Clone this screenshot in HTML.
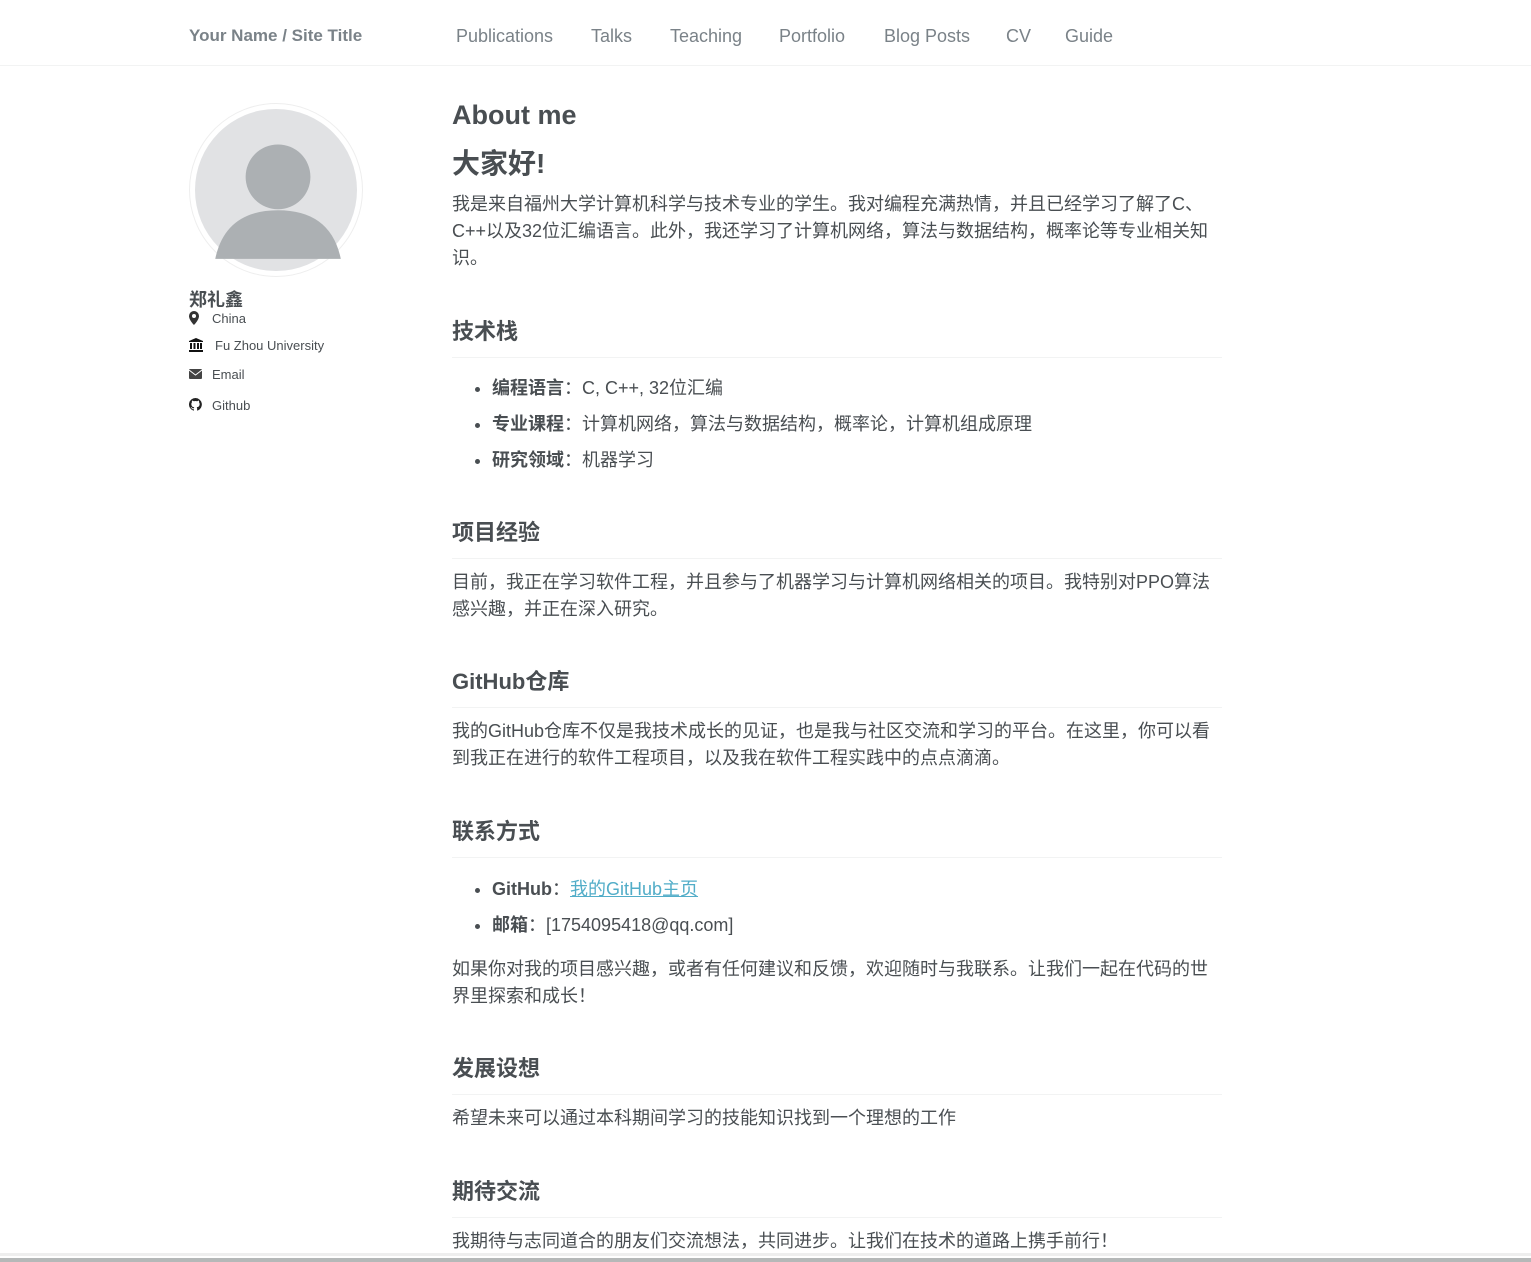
<!DOCTYPE html>
<html><head><meta charset="utf-8"><style>
body{margin:0;width:1531px;height:1262px;overflow:hidden;background:#fff;font-family:"Liberation Sans","Noto Sans CJK SC",sans-serif;color:#494e52;position:relative}
.a{position:absolute;white-space:nowrap}
.nav{position:absolute;left:0;top:0;width:1531px;height:65px;border-bottom:1px solid #f2f3f3}
.nav span{position:absolute;top:26px;font-size:18px;color:#7a8288}
p.t{position:absolute;left:452px;margin:0;width:770px;font-size:18px;line-height:27px;white-space:normal}
h2{position:absolute;left:452px;margin:0;width:770px;font-size:22px;font-weight:bold;border-bottom:1px solid #f2f3f3;height:40px;line-height:30px}
ul{position:absolute;left:452px;margin:0;padding-left:40px;font-size:18px;line-height:36px}
b{color:#494e52}
.side{font-size:13px;color:#494e52}
</style></head><body>
<div class="nav">
<span style="left:189px;font-weight:bold;font-size:17px">Your Name / Site Title</span>
<span style="left:456px">Publications</span><span style="left:591px">Talks</span><span style="left:670px">Teaching</span><span style="left:779px">Portfolio</span><span style="left:884px">Blog Posts</span><span style="left:1006px">CV</span><span style="left:1065px">Guide</span>
</div>
<div class="a" style="left:189px;top:103px;width:174px;height:174px;border-radius:50%;border:1px solid #eee;box-sizing:border-box;padding:5px">
<svg width="162" height="162" viewBox="0 0 160 160"><circle cx="80" cy="80" r="80" fill="#e1e2e4"/><circle cx="82" cy="67" r="32" fill="#acb0b3"/><path d="M20 148 Q30 100 82 100 Q134 100 144 148 Z" fill="#acb0b3"/></svg></div>
<div class="a" style="left:189px;top:286px;font-size:18px;font-weight:bold">郑礼鑫</div>
<div class="a side" style="left:189px;top:311px"><svg width="10" height="14" viewBox="0 0 10 14"><path d="M5 0a5 5 0 0 0-5 5c0 4 5 9 5 9s5-5 5-9a5 5 0 0 0-5-5zm0 7a2 2 0 1 1 0-4 2 2 0 0 1 0 4z" fill="#333"/></svg><span style="position:absolute;left:23px;top:0">China</span></div>
<div class="a side" style="left:189px;top:338px"><svg width="14" height="14" viewBox="0 0 14 14" fill="#111"><path d="M7 0L0 3v1h14V3z"/><rect x="1" y="5" width="2" height="6"/><rect x="4.5" y="5" width="2" height="6"/><rect x="8" y="5" width="2" height="6"/><rect x="11" y="5" width="2" height="6"/><rect x="0" y="12" width="14" height="2"/></svg><span style="position:absolute;left:26px;top:0">Fu Zhou University</span></div>
<div class="a side" style="left:189px;top:367px"><svg width="13" height="10" viewBox="0 0 13 10"><rect width="13" height="10" rx="1" fill="#444"/><path d="M0 1l6.5 5 6.5-5" stroke="#fff" fill="none"/></svg><span style="position:absolute;left:23px;top:0">Email</span></div>
<div class="a side" style="left:189px;top:398px"><svg width="13" height="13" viewBox="0 0 16 16"><path fill="#222" d="M8 0a8 8 0 0 0-2.5 15.6c.4 0 .5-.2.5-.4v-1.5c-2.2.5-2.7-1-2.7-1-.4-.9-.9-1.2-.9-1.2-.7-.5.1-.5.1-.5.8.1 1.2.8 1.2.8.7 1.3 1.9.9 2.3.7.1-.5.3-.9.5-1.1-1.8-.2-3.6-.9-3.6-4 0-.9.3-1.6.8-2.1-.1-.2-.4-1 .1-2.1 0 0 .7-.2 2.2.8a7.4 7.4 0 0 1 4 0c1.5-1 2.2-.8 2.2-.8.4 1.1.2 1.9.1 2.1.5.5.8 1.2.8 2.1 0 3.1-1.9 3.8-3.6 4 .3.3.5.8.5 1.5v2.2c0 .2.1.5.6.4A8 8 0 0 0 8 0z"/></svg><span style="position:absolute;left:23px;top:0">Github</span></div>

<div class="a" style="left:452px;top:100px;font-size:27px;font-weight:bold">About me</div>
<div class="a" style="left:452px;top:142px;font-size:28px;font-weight:bold">大家好!</div>
<p class="t" style="top:191px">我是来自福州大学计算机科学与技术专业的学生。我对编程充满热情，并且已经学习了解了C、C++以及32位汇编语言。此外，我还学习了计算机网络，算法与数据结构，概率论等专业相关知识。</p>
<h2 style="top:317px">技术栈</h2>
<ul style="top:370px"><li><b>编程语言</b>：C, C++, 32位汇编</li><li><b>专业课程</b>：计算机网络，算法与数据结构，概率论，计算机组成原理</li><li><b>研究领域</b>：机器学习</li></ul>
<h2 style="top:518px">项目经验</h2>
<p class="t" style="top:569px">目前，我正在学习软件工程，并且参与了机器学习与计算机网络相关的项目。我特别对PPO算法感兴趣，并正在深入研究。</p>
<h2 style="top:667px">GitHub仓库</h2>
<p class="t" style="top:718px">我的GitHub仓库不仅是我技术成长的见证，也是我与社区交流和学习的平台。在这里，你可以看到我正在进行的软件工程项目，以及我在软件工程实践中的点点滴滴。</p>
<h2 style="top:817px">联系方式</h2>
<ul style="top:871px"><li><b>GitHub</b>：<span style="color:#52adc8;text-decoration:underline">我的GitHub主页</span></li><li><b>邮箱</b>：[1754095418@qq.com]</li></ul>
<p class="t" style="top:956px">如果你对我的项目感兴趣，或者有任何建议和反馈，欢迎随时与我联系。让我们一起在代码的世界里探索和成长！</p>
<h2 style="top:1054px">发展设想</h2>
<p class="t" style="top:1105px">希望未来可以通过本科期间学习的技能知识找到一个理想的工作</p>
<h2 style="top:1177px">期待交流</h2>
<p class="t" style="top:1228px">我期待与志同道合的朋友们交流想法，共同进步。让我们在技术的道路上携手前行！</p>
<div class="a" style="left:0;top:1253px;width:1531px;height:3px;background:#eee"></div>
<div class="a" style="left:0;top:1258px;width:1531px;height:4px;background:#b5b8b8"></div>
</body></html>
